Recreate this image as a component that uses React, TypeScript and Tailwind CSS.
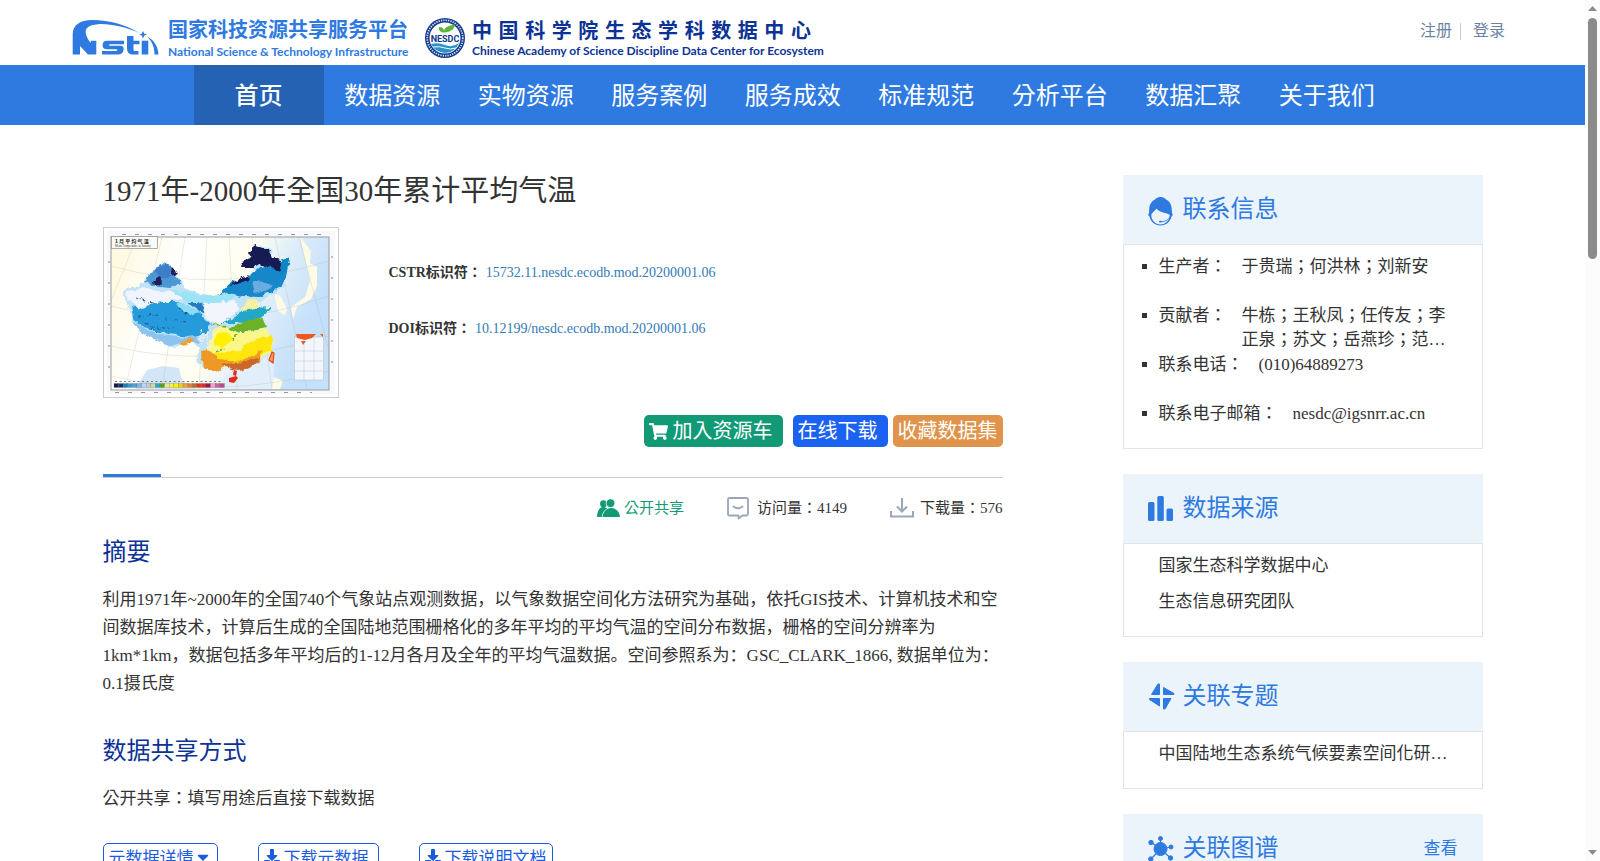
import type { ReactNode } from "react";
import { FaCaretDown, FaDownload, FaShoppingCart } from "react-icons/fa";

const navItems = ["数据资源", "实物资源", "服务案例", "服务成效", "标准规范", "分析平台", "数据汇聚", "关于我们"];

const legend = [
  "#141b4d", "#1f2a6b", "#0e7fc0", "#2f9ad8", "#5b9bd5", "#7fb8e6", "#b5d5f0", "#c7c9dd", "#c9dd8a", "#2fa7c4", "#5a9f1e",
  "#e9e98a", "#f7f24a", "#fff200", "#f3cf1b", "#e8a33a", "#dd8434", "#c9662b", "#e0341f", "#dd2a2a", "#9b1458", "#e6a3cf", "#cf5fa5", "#b9488c",
];

function NstiLogo() {
  return (
    <svg viewBox="0 0 100 46" className="h-[46px] w-[100px] shrink-0" aria-label="Nsti" role="img">
      <g fill="#2e7ae1">
        <path d="M4.700 40.500V20C5 11 12 6 24 6C42 6 58 11 72.500 19.500C58 13 42 9.500 30 10.200C20 11 16.500 14.500 18 20C19 24 20.500 26.500 22.700 29V26.700H28.300V40.500H20L12 32V40.500Z" />
        <path d="M35 29C35.500 27.500 37 26.700 39 26.700H56V30.200H42Q41 30.200 41 31T42 31.800H52C55 31.800 56 33 55.600 35.500C55.200 38.800 53.500 40.500 50 40.500H34V37H48Q49.300 37 49.300 36T48 35.200H39C35 35.200 34 33 35 29Z" />
        <path d="M59 22H65.500V26.700H71.500V30.200H65.500V35.500Q65.500 37 67 37H70.500V40.500H65Q59 40.500 59 34.500Z" />
        <path d="M73.700 26.700H80.300V40.500H73.700Z" />
        <path d="M75 17L76.300 19.700L79 20.600L76.300 21.600L75 24.500L73.700 21.600L71 20.600L73.700 19.700Z" />
        <path d="M79 22.500C86 26 90 32 90.500 40.500H86.500C86.500 33 84 27 79 22.500Z" />
      </g>
    </svg>
  );
}

function NesdcSeal() {
  return (
    <svg viewBox="0 0 42 42" className="h-[42px] w-[42px] shrink-0" aria-label="NESDC" role="img">
      <circle cx="21" cy="21" r="20" fill="#123a8c" />
      <circle cx="21" cy="21" r="17.800" fill="none" stroke="#d5def0" strokeWidth="1.800" strokeDasharray="1.300 1.100" />
      <circle cx="21" cy="21" r="15.500" fill="#fff" />
      <path d="M7 27Q14 25 21 28T35 26Q31 35.500 21 36Q11 35 7 27Z" fill="#2b93c9" />
      <path d="M9 30Q16 29 21 31T32 31" fill="none" stroke="#fff" strokeWidth="1" />
      <path d="M19.500 15.500C15 15 14.500 11.500 15 10C18 10 20 11.500 20 14C20.500 10 26 8 31 7.500C30.500 12 27 15 20.500 15.500Z" fill="#5fb43c" />
      <text x="21" y="25" textAnchor="middle" fontSize="9" fontWeight="700" fill="#123a8c" fontFamily="Roboto, Liberation Sans, sans-serif">NESDC</text>
    </svg>
  );
}

function ClimateMap() {
  return (
    <svg viewBox="0 0 228 163" className="block h-[163px] w-full" preserveAspectRatio="none" role="img" aria-label="1月平均气温">
      <defs>
        <linearGradient id="sea" x1="0" y1="0" x2="1" y2="0.300">
          <stop offset="0" stopColor="#fdf9d9" />
          <stop offset="0.350" stopColor="#ffffff" />
          <stop offset="0.600" stopColor="#fffef0" />
          <stop offset="0.800" stopColor="#dcecfa" />
          <stop offset="1" stopColor="#c4e0fa" />
        </linearGradient>
        <filter id="coast" x="-5%" y="-5%" width="110%" height="110%">
          <feTurbulence type="fractalNoise" baseFrequency="0.120" numOctaves="4" seed="4" />
          <feDisplacementMap in="SourceGraphic" scale="7" xChannelSelector="R" yChannelSelector="G" />
        </filter>
      </defs>
      <rect width="228" height="163" fill="#f7f9fc" />
      <rect x="4" y="6" width="218" height="153" fill="url(#sea)" />
      <path d="M28 158L40 139L56 135L72 137L75 150L90 158Z" fill="#d3e6f7" />
      <path d="M112 158L118 145L150 132L168 120L166 158Z" fill="#e1effb" />
      <path d="M193 6L204 20L203 32L210 36L210 55L204 68L190 76L186 88L184 76L198 66L203 50L199 32Z" fill="#fdfbe6" />
      <path d="M167 62L174 66L180 78L178 84L171 80Z" fill="#fdfbe6" />
      <path d="M167 146L176 150L173 158H165Z" fill="#fdfbe6" />
      <g fill="none" stroke="#a6a99a" strokeWidth="0.400" opacity="0.600">
        <path d="M4 35Q110 65 222 30M4 75Q110 105 222 65M4 115Q110 140 222 105M4 145Q110 170 222 140" />
        <path d="M30 6L4 70M55 6L18 158M78 6L55 158M100 6L92 158M122 6L130 158M145 6L165 158M168 6L200 158M192 6L222 120" />
      </g>
      <g filter="url(#coast)" transform="translate(-1 1) scale(0.970 1)">
        <path d="M19 58L34 53L42 50L41 43L52 37L61 30L70 36L72 44L80 51L84 58L100 62L115 64L130 58L133 50L145 45L154 41L151 36L144 36L148 28L153 24L151 17L161 14L170 17L171 25L180 28L190 25L187 44L183 54L173 62L165 66L154 72L162 77L155 85L160 97L167 110L164 121L157 131L143 137L132 138L124 135L112 136L105 139L99 135L94 127L97 116L85 111L70 116L57 110L45 105L28 93L26 80L22 70Z" fill="#bfe2f7" />
        <path d="M21 59L42 56L58 61L72 58L82 67L65 70L50 72L34 76L25 71Z" fill="#f0f4fc" />
        <path d="M26 74L38 77L55 70L75 70L95 79L108 92L104 100L92 104L84 105L65 102L46 98L28 88Z" fill="#279bdb" />
        <path d="M29 90L45 99L65 104L83 106L95 103L99 112L80 112L65 113L45 105L30 95Z" fill="#8cc4ed" />
        <path d="M40 50L42 43L52 37L61 30L70 36L72 44L78 51L66 55L54 54Z" fill="#4a97d4" />
        <path d="M52 38L62 31L67 36L66 45L56 48Z" fill="#3d7fc6" />
        <path d="M68 33L72 37L74 42L70 44L67 40Z" fill="#201f5e" />
        <path d="M48 50L54 46L58 50L52 53Z" fill="#201f5e" />
        <path d="M65 57L82 60L110 64L137 59L130 68L108 72L84 70Z" fill="#9ce3f6" />
        <path d="M75 71L85 73L98 80L86 83L74 76Z" fill="#8bdcf4" />
        <path d="M85 70L95 70L108 80L100 81Z" fill="#207cbf" />
        <path d="M100 72L113 70L133 68L139 78L123 89L112 94L104 86Z" fill="#f3f5fd" />
        <path d="M116 64L130 50L147 45L159 35L173 33L190 25L187 44L181 54L170 60L157 65L140 64L128 61Z" fill="#1787c9" />
        <path d="M150 52L160 48L172 53L163 60L152 62Z" fill="#69ade0" />
        <path d="M147 20L155 14L168 18L171 25L180 28L178 40L168 35L158 32L151 36L138 36L143 28L150 25Z" fill="#191c53" />
        <path d="M128 54L138 46L149 42L149 46L139 51Z" fill="#191c53" />
        <path d="M180 28L190 25L187 40L177 44Z" fill="#0787c4" />
        <path d="M140 79L145 68L154 67L159 77L149 81Z" fill="#f5f1a0" />
        <path d="M119 91L134 84L145 79L154 76L170 75L164 81L158 88L150 90L135 91Z" fill="#24a7c7" />
        <path d="M125 96L138 92L146 88L162 87L166 96L149 99L132 101Z" fill="#6cb226" />
        <path d="M110 100L122 94L136 101L166 97L172 109L168 122L152 132L132 136L110 133L104 120Z" fill="#fbf68a" />
        <path d="M114 101L122 99L130 106L120 116L110 112Z" fill="#ffef00" />
        <path d="M112 121L135 120L153 107L172 104L169 119L155 129L135 134L108 132Z" fill="#ffe710" />
        <path d="M98 120L106 119L116 127L139 129L163 118L157 130L145 137L132 138L123 134L112 140L103 137L99 129Z" fill="#ef9828" />
        <path d="M121 132L144 130L159 125L151 134L138 139L130 138Z" fill="#c9682a" />
        <path d="M75 113L86 107L92 109L81 115Z" fill="#f0a12e" />
        <path d="M30 66L53 72M33 84L57 83M48 95L72 97M40 91L54 100M62 86L83 90M73 77L91 85" fill="none" stroke="#28549b" strokeWidth="1.100" strokeDasharray="3 3 1 2" />
        <path d="M98 96L98 112L103 99L106 118L112 100" fill="none" stroke="#eef0ef" strokeWidth="1.500" strokeDasharray="2 1" />
        <path d="M109 93L125 95M114 120L122 117M130 108L134 103" fill="none" stroke="#6cb226" strokeWidth="1.600" strokeDasharray="3 1" />
      </g>
      <path d="M122 147L129 145L131 147L127 152L122 151ZM127 139L130 140L129 145L126 144Z" fill="#e3291e" />
      <path d="M165 121L167 122L166 132L162 129Z" fill="#f7a055" stroke="#e13f20" strokeWidth="1.200" />
      <rect x="187.500" y="106" width="29" height="43" fill="#f1f7fd" stroke="#b9b9b9" strokeWidth="0.500" />
      <path d="M188 120H216M188 130H216M188 140H216M197 106V149M207 106V149" stroke="#b9b9b9" strokeWidth="0.400" />
      <path d="M189 103H209L205 107L198 109L190 107ZM194 110L199 110L196 114ZM213 103H216V106Z" fill="#f0561d" />
      <rect x="4" y="6" width="218" height="153" fill="none" stroke="#9a9a9a" strokeWidth="1" />
      <rect x="4.500" y="5.500" width="46" height="12" fill="#fbfbf6" stroke="#8a8a8a" strokeWidth="0.700" />
      <text x="8" y="11.500" fontSize="5" fontWeight="700" fill="#222" fontFamily="Noto Sans CJK TC, sans-serif">1 月 平 均 气 温</text>
      <text x="8" y="16" fontSize="3" fill="#333" fontFamily="Liberation Serif, serif">Mean Temperature in January</text>
      <path d="M15 3.500H215M8 161.500H205" stroke="#999" strokeWidth="1.200" strokeDasharray="4 9" />
      <path d="M2 30V150M225 25V150" stroke="#999" strokeWidth="1.200" strokeDasharray="2 19" />
      <path d="M8 150.500H115" stroke="#777" strokeWidth="1" strokeDasharray="2 2.500" />
      {legend.map((color, i) => (
        <rect key={i} x={7 + i * 4.600} y="152.500" width="4.600" height="4" fill={color} stroke="#555" strokeWidth="0.200" />
      ))}
    </svg>
  );
}

function HeadsetIcon() {
  return (
    <svg viewBox="0 0 25 29" className="mt-[3px] h-[29px] w-[25px]" fill="#2e7ae1" aria-hidden="true">
      <path d="M12.500 0C9.500 0 7.500 1.500 7 2.500C3 4.500 1.200 8 1.200 13L1 16C0 16.500 0 19 1.500 19.500C2.500 24.500 7 28.500 12.500 28.500S22.500 24.500 23.500 19.500C25 19 25 16.500 24 16L23.800 13C23.800 8 22 4.500 18 2.500C17.500 1.500 15.500 0 12.500 0Z" />
      <path d="M8.500 11.500C11 15.500 17 15 22 18C21.500 23.500 17.500 27.400 12.500 27.400S3.500 23.500 3.300 18.500C3.300 16 6.500 14.500 8.500 11.500Z" fill="#ecf4fb" />
      <path d="M22.500 18C21.500 22 18.500 24.500 13.500 24.700" fill="none" stroke="#2e7ae1" strokeWidth="0.900" />
      <ellipse cx="12.500" cy="24.600" rx="1.700" ry="0.900" />
    </svg>
  );
}

function BarsIcon() {
  return (
    <svg viewBox="0 0 25 25" className="h-[25px] w-[25px]" fill="#2e7ae1" aria-hidden="true">
      <rect x="0" y="6" width="6.500" height="19" rx="1.500" />
      <rect x="9.300" y="0" width="6.500" height="25" rx="1.500" />
      <rect x="18.500" y="12.500" width="6.500" height="12.500" rx="1.500" />
    </svg>
  );
}

function PinwheelIcon() {
  return (
    <svg viewBox="0 0 27 27" className="h-[27px] w-[27px]" fill="#2e7ae1" stroke="#2e7ae1" strokeWidth="1" strokeLinejoin="round" aria-hidden="true">
      <path d="M10 1L11.500 1V11.500H3.500Z" />
      <path d="M15.500 4.500L26 10.500V11.500H15.500Z" />
      <path d="M1.500 15.500H11.500V23L1.500 16.500Z" />
      <path d="M15.500 15.500H23L17 26H15.500Z" />
    </svg>
  );
}

function GraphIcon() {
  return (
    <svg viewBox="0 0 26 26" className="h-[26px] w-[26px]" fill="#2e7ae1" stroke="#2e7ae1" aria-hidden="true">
      <path d="M12.500 13L12.500 3M12.500 13L3.500 6.500M12.500 13L23 11M12.500 13L3 23M12.500 13L22.500 22" strokeWidth="1.200" />
      <circle cx="12.500" cy="13" r="6.500" />
      <circle cx="12.500" cy="2.500" r="2" />
      <circle cx="3" cy="6.500" r="2.200" />
      <circle cx="23" cy="11" r="2" />
      <circle cx="2.800" cy="23" r="2.200" />
      <circle cx="22.500" cy="22" r="2.200" />
    </svg>
  );
}

function ShareIcon() {
  return (
    <svg viewBox="0 0 23 18" className="h-[18px] w-[23px]" fill="#129a77" aria-hidden="true">
      <circle cx="6.500" cy="4.800" r="3.500" />
      <path d="M0 18C0 12.500 2.500 8 6 8C7.500 8 9 8.500 10 9.500C6.500 11.500 5 14.500 4.800 18Z" />
      <circle cx="13.500" cy="4.200" r="4.400" stroke="#fff" strokeWidth="0.800" />
      <path d="M5.500 18C6 12.500 9.500 9 14.200 9S22.500 12.500 23 18Z" />
    </svg>
  );
}

function CommentIcon() {
  return (
    <svg viewBox="0 0 22 23" className="h-[23px] w-[22px]" fill="none" stroke="#9aa7b8" strokeWidth="1.800" strokeLinejoin="round" aria-hidden="true">
      <path d="M2.500 1H19.500Q21 1 21 2.500V17Q21 18.500 19.500 18.500H15.500L11.500 21.500V18.500H2.500Q1 18.500 1 17V2.500Q1 1 2.500 1Z" />
      <path d="M6.500 9.500Q11 13 15.500 9.500" strokeLinecap="round" />
    </svg>
  );
}

function TrayIcon() {
  return (
    <svg viewBox="0 0 24 20" className="h-[20px] w-[24px]" fill="none" stroke="#9aa7b8" strokeWidth="2" aria-hidden="true">
      <path d="M1 13V18.500H23V13" />
      <path d="M12 0V13M7 8.500L12 13.500L17 8.500" />
    </svg>
  );
}

type CardProps = { icon: ReactNode; title: string; action?: string; children?: ReactNode };

function Card({ icon, title, action, children }: CardProps) {
  return (
    <section>
      <header className="flex h-[69px] items-center bg-[#ecf4fb] px-[25px] text-[#2e7ae1]">
        <span className="flex w-[35px] items-center">{icon}</span>
        <h2 className="flex-1 pb-0.5 text-2xl leading-8">{title}</h2>
        {action && <a href="#graph" className="text-[17px]">{action}</a>}
      </header>
      <div className="border border-[#e4e4e4] text-[17px]">{children}</div>
    </section>
  );
}

function ContactRow({ label, children }: { label: string; children: ReactNode }) {
  return (
    <li className="flex h-[49px] leading-6">
      <span className="mt-[9px] mr-3 size-[5px] shrink-0 bg-[#333]" />
      <span className="mr-[15px] shrink-0">{label}</span>
      <span className="line-clamp-2 h-12 w-[205px]">{children}</span>
    </li>
  );
}

function ScrollBar() {
  return (
    <div className="flex w-[15px] shrink-0 flex-col items-center justify-between bg-[#fcfcfc] py-[6px]" aria-hidden="true">
      <div className="flex flex-col items-center gap-[7px]">
        <svg viewBox="0 0 9 5" className="h-[5px] w-[9px]" fill="#8b8b8b"><path d="M0 5L4.500 0L9 5Z" /></svg>
        <div className="h-[241px] w-[9px] rounded-full bg-[#8b8b8b]" />
      </div>
      <svg viewBox="0 0 9 5" className="h-[5px] w-[9px]" fill="#8b8b8b"><path d="M0 0L4.500 5L9 0Z" /></svg>
    </div>
  );
}

const outlineButton = "flex h-8 items-center rounded-[5px] border border-[#1c5bdc] px-[5px] text-[17px] text-[#1c5bdc]";

export default function App() {
  return (
    <div className="flex h-screen bg-white font-['Liberation_Serif','Noto_Sans_CJK_TC',serif] text-[#333]">
      <div className="flex-1 overflow-y-auto [scrollbar-width:none]">
        <header className="flex h-[65px] items-start justify-between pr-20 pl-[68px]">
          <div className="flex">
            <div className="flex pt-[14px]">
              <NstiLogo />
            </div>
            <div className="w-[256px] pt-4 whitespace-nowrap text-[#2e7ae1]">
              <p className="font-['Noto_Sans_CJK_SC',sans-serif] text-xl leading-[26px] font-bold">国家科技资源共享服务平台</p>
              <p className="font-['Lato',sans-serif] text-xs leading-5 font-bold">National Science &amp; Technology Infrastructure</p>
            </div>
            <div className="pt-[17px] pr-[6px]">
              <NesdcSeal />
            </div>
            <div className="pt-[17px] whitespace-nowrap text-[#0c3296]">
              <p className="flex w-[339px] justify-between font-['Noto_Sans_CJK_SC',sans-serif] text-xl leading-[26px] font-bold">
                {Array.from("中国科学院生态学科数据中心").map((char, i) => (
                  <span key={i}>{char}</span>
                ))}
              </p>
              <p className="font-['Lato','Liberation_Sans',sans-serif] text-xs leading-4 font-bold">Chinese Academy of Science Discipline Data Center for Ecosystem</p>
            </div>
          </div>
          <div className="flex items-center pt-[19px] text-base text-[#6b83a3]">
            <a href="#register">注册</a>
            <span className="mr-3 ml-2 h-[17px] w-px bg-[#c3cfdf]" />
            <a href="#login">登录</a>
          </div>
        </header>

        <nav className="bg-[#2e7ae1] text-2xl text-white">
          <ul className="mx-auto flex h-[60px] w-[1198px]">
            <li className="w-[130px] bg-[#2662b3]">
              <a href="#home" className="flex h-full items-center justify-center pt-px font-medium">首页</a>
            </li>
            {navItems.map((item) => (
              <li key={item} className="flex-1">
                <a href="#nav" className="flex h-full items-center justify-center pt-px pl-1">{item}</a>
              </li>
            ))}
          </ul>
        </nav>

        <div className="mx-auto flex w-[1380px] items-start justify-between pt-[50px]">
          <main className="w-[900px]">
            <h1 className="text-[29px] leading-8">1971年-2000年全国30年累计平均气温</h1>
            <div className="mt-5 flex">
              <div className="w-[236px] border border-[#ccc] p-[3px]">
                <ClimateMap />
              </div>
              <dl className="ml-[50px] pt-9 text-sm leading-5">
                <div className="flex gap-1">
                  <dt className="font-bold">CSTR标识符：</dt>
                  <dd className="text-[#337ab7]"><a href="#cstr">15732.11.nesdc.ecodb.mod.20200001.06</a></dd>
                </div>
                <div className="mt-9 flex gap-1">
                  <dt className="font-bold">DOI标识符：</dt>
                  <dd className="text-[#337ab7]"><a href="#doi">10.12199/nesdc.ecodb.mod.20200001.06</a></dd>
                </div>
              </dl>
            </div>

            <div className="mt-[17px] flex justify-end text-xl text-white">
              <button type="button" className="mr-[10px] flex h-8 w-[139px] items-center gap-[5px] rounded-[5px] bg-[#129a77] px-[5px]">
                <FaShoppingCart size={19} />
                加入资源车
              </button>
              <button type="button" className="mr-[5px] h-8 w-[95px] rounded-[5px] bg-[#1c62f2] px-[5px] text-left">在线下载</button>
              <button type="button" className="h-8 w-[110px] rounded-[5px] bg-[#e0934a] px-[5px] text-left">收藏数据集</button>
            </div>

            <div className="mt-[27px] border-b border-[#ccc]">
              <div className="h-[3px] w-[58px] bg-[#2e7ae1]" />
            </div>

            <div className="mt-[18px] flex h-6 items-center justify-end gap-[43px] text-[15px]">
              <span className="flex items-center gap-1 text-[#129a77]"><ShareIcon />公开共享</span>
              <span className="flex items-center gap-2"><CommentIcon />访问量：4149</span>
              <span className="flex items-center gap-[6px]"><TrayIcon />下载量：576</span>
            </div>

            <h2 className="mt-4 text-2xl leading-8 text-[#0c3296]">摘要</h2>
            <p className="mt-[18px] font-['Liberation_Serif','Noto_Sans_CJK_SC',serif] text-[17px] leading-7">
              利用1971年~2000年的全国740个气象站点观测数据，以气象数据空间化方法研究为基础，依托GIS技术、计算机技术和空间数据库技术，计算后生成的全国陆地范围栅格化的多年平均的平均气温的空间分布数据，栅格的空间分辨率为1km*1km，数据包括多年平均后的1-12月各月及全年的平均气温数据。空间参照系为：GSC_CLARK_1866, 数据单位为：0.1摄氏度
            </p>
            <h2 className="mt-[37px] text-2xl leading-8 text-[#0c3296]">数据共享方式</h2>
            <p className="mt-[18px] text-[17px] leading-7">公开共享：填写用途后直接下载数据</p>
            <div className="mt-[30px] flex gap-10">
              <button type="button" className={`${outlineButton} w-[115px]`}>元数据详情<FaCaretDown size={18} className="mb-1" /></button>
              <button type="button" className={`${outlineButton} w-[121px] gap-1`}><FaDownload size={16} className="mb-1" />下载元数据</button>
              <button type="button" className={`${outlineButton} w-[134px] gap-1`}><FaDownload size={16} className="mb-1" />下载说明文档</button>
            </div>
          </main>

          <aside className="flex w-[360px] flex-col gap-[25px]">
            <Card icon={<HeadsetIcon />} title="联系信息">
              <ul className="h-[203px] pt-[10px] pl-[18px]">
                <ContactRow label="生产者：">于贵瑞；何洪林；刘新安</ContactRow>
                <ContactRow label="贡献者：">牛栋；王秋凤；任传友；李正泉；苏文；岳燕珍；范金龙；张雷明；于贵瑞</ContactRow>
                <ContactRow label="联系电话：">(010)64889273</ContactRow>
                <ContactRow label="联系电子邮箱：">nesdc@igsnrr.ac.cn</ContactRow>
              </ul>
            </Card>
            <Card icon={<BarsIcon />} title="数据来源">
              <ul className="px-[35px] pt-1 pb-4 leading-9">
                <li>国家生态科学数据中心</li>
                <li>生态信息研究团队</li>
              </ul>
            </Card>
            <Card icon={<PinwheelIcon />} title="关联专题">
              <p className="truncate pt-1 pr-8 pb-4 pl-[35px] leading-9">中国陆地生态系统气候要素空间化研究专题</p>
            </Card>
            <Card icon={<GraphIcon />} title="关联图谱" action="查看" />
          </aside>
        </div>
      </div>
      <ScrollBar />
    </div>
  );
}
